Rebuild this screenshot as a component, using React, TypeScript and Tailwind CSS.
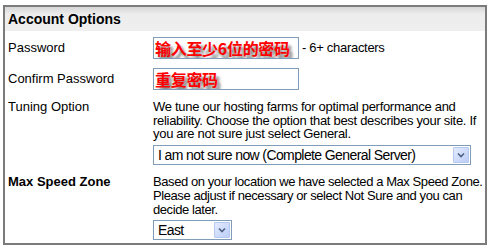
import React from 'react';

const FakeSelect = ({ value, width }: { value: string; width: string }) => (
  <div className={`flex items-center h-[20px] border border-[#7f9db9] bg-white ${width}`}>
    <span className="flex-1 pl-[4px] text-[14px] tracking-[-0.6px] leading-[18px] text-black whitespace-nowrap overflow-hidden">{value}</span>
    <span className="flex items-center justify-center w-[16px] h-[16px] mr-[1px] border border-[#b7c8ef] rounded-[1px] bg-[linear-gradient(135deg,#e3ebfd,#bccdf8)]">
      <svg width="8" height="6" viewBox="0 0 8 6">
        <path d="M1 1.5 L4 4.5 L7 1.5" fill="none" stroke="#4d6185" strokeWidth="1.6" />
      </svg>
    </span>
  </div>
);

const RedInput = ({ text }: { text: string }) => (
  <div className="w-[146px] h-[22px] border border-[#7f9db9] bg-white flex items-center pl-[1px] overflow-hidden">
    <span className="text-[16px] font-bold leading-[20px] text-[#ff0000] whitespace-nowrap [text-shadow:3px_4px_3px_rgba(0,0,0,0.55)] font-['Noto_Sans_CJK_SC',sans-serif]">
      {text}
    </span>
  </div>
);

export default function App() {
  return (
    <div className="w-[489px] h-[250px] bg-white pt-[5px] pl-[3px] font-['Liberation_Sans',Arial,sans-serif] text-[13px] tracking-[-0.3px] text-black">
      <div className="w-[484px] h-[240px] border-2 border-[#7b7b7b] flex flex-col">
        <div className="h-[24px] bg-[linear-gradient(#d6d6d6,#ededed_30%,#efefef)] flex items-center pl-[3px]">
          <span className="text-[14px] font-bold tracking-normal">Account Options</span>
        </div>

        <div className="grid grid-cols-[145px_1fr] pl-[3px] pr-[4px] pt-[6px] items-start">
          <div className="h-[22px] flex items-center tracking-normal">Password</div>
          <div className="flex items-center gap-[3px]">
            <RedInput text="输入至少6位的密码" />
            <span>- 6+ characters</span>
          </div>

          <div className="h-[22px] flex items-center mt-[9px] tracking-normal">Confirm Password</div>
          <div className="mt-[9px]">
            <RedInput text="重复密码" />
          </div>

          <div className="mt-[10px] leading-[13.5px] tracking-normal">Tuning Option</div>
          <div className="mt-[10px] leading-[13.5px]">
            <p className="whitespace-nowrap">
              We tune our hosting farms for optimal performance and
              <br />
              reliability. Choose the option that best describes your site. If
              <br />
              you are not sure just select General.
            </p>
            <div className="mt-[4px]">
              <FakeSelect value="I am not sure now (Complete General Server)" width="w-[318px]" />
            </div>
          </div>

          <div className="mt-[10px] leading-[14px] font-bold tracking-normal">Max Speed Zone</div>
          <div className="mt-[10px] leading-[14px]">
            <p className="whitespace-nowrap tracking-[-0.42px]">
              Based on your location we have selected a Max Speed Zone.
              <br />
              Please adjust if necessary or select Not Sure and you can
              <br />
              decide later.
            </p>
            <div className="mt-[3px]">
              <FakeSelect value="East" width="w-[79px]" />
            </div>
          </div>
        </div>
      </div>
    </div>
  );
}
